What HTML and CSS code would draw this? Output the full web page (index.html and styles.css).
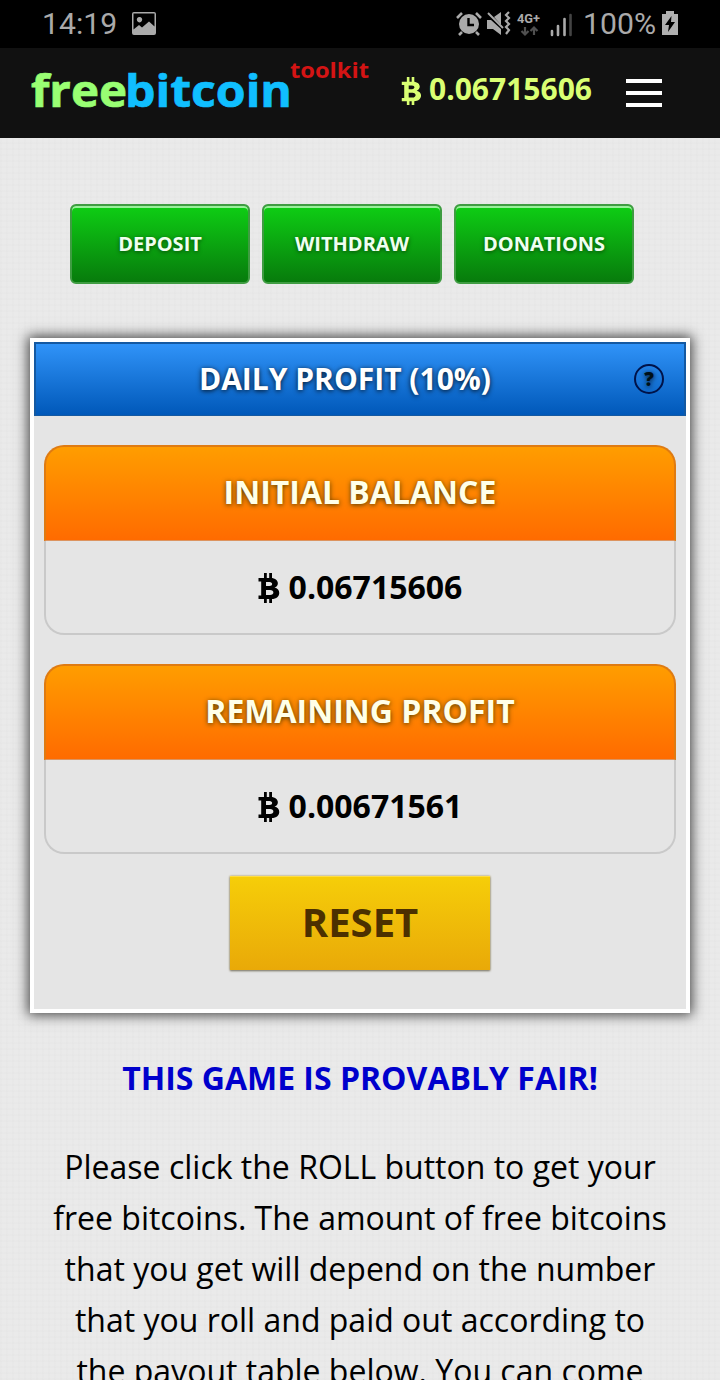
FILE: index.html
```html
<!DOCTYPE html>
<html lang="en">
<head>
<meta charset="utf-8">
<title>FreeBitcoin Toolkit</title>
<link rel="stylesheet" href="styles.css">
</head>
<body>
<svg width="0" height="0" class="defs" aria-hidden="true">
  <symbol id="btc" viewBox="0 0 22 30">
    <path d="M0.5 5H12.5C21.500 5 21.500 13.3 16.500 14.6C23.500 15.8 23 26 13.5 26H0.5V22.500H3.2V8.500H0.5ZM8 9V13H11.5C15 13 15 9 11.5 9ZM8 17V22H12C16.500 22 16.500 17 12 17Z" fill-rule="evenodd"/>
    <path d="M6 0H8.8V7H6ZM11.2 0H14V7H11.2ZM6 24H8.8V30H6ZM11.2 24H14V30H11.2Z"/>
  </symbol>
</svg>
<div class="status">
  <span class="clock">14:19</span>
  <svg class="picture" width="24" height="23" viewBox="0 0 24 23"><path fill="#aaa" fill-rule="evenodd" d="M2 0H22Q24 0 24 2V21Q24 23 22 23H2Q0 23 0 21V2Q0 0 2 0ZM1.5 1.5V17.5L7 13L10 15.5L17 9.500L22.500 14.500V1.500ZM7.500 5A2.700 2.700 0 1 1 7.490 5Z"/></svg>
  <svg class="indicators" width="120" height="30" viewBox="0 0 120 30">
    <g fill="#aaa" stroke="#aaa">
      <circle cx="13" cy="15" r="10" stroke="none"/>
      <path d="M1 9L6 4M20 4L25 9M6 23L3 26M20 23L23 26" fill="none" stroke-width="2.600"/>
      <path d="M12.500 9V16H18" fill="none" stroke="#000" stroke-width="2.400"/>
      <path d="M31 11H35L45 20V26L37 20H31ZM38 8L45 3V16Z" stroke="none"/>
      <path d="M32 4L47 19" fill="none" stroke-width="2"/>
      <path d="M53 3L50 6L53 9L50 12L53 15L50 18L53 21L50 25" fill="none" stroke-width="2.200"/>
    </g>
    <text x="61" y="14" class="network" textLength="23" lengthAdjust="spacingAndGlyphs">4G+</text>
    <path d="M69 18V25M65.500 22L69 25.500L72.500 22M78 26V18M74.500 22L78 18.500L81.500 22" fill="none" stroke="#505050" stroke-width="2.200"/>
    <path d="M96 22V26M102 17V26M108.500 10V26" stroke="#aaa" stroke-width="2.600" stroke-linecap="round"/>
    <path d="M114.500 6V26" stroke="#444" stroke-width="2.600" stroke-linecap="round"/>
  </svg>
  <span class="percent">100%</span>
  <svg class="battery" width="16" height="24" viewBox="0 0 16 24"><path fill="#b0b0b0" d="M4 0H12V3H16V24H0V3H4Z"/><path d="M9.500 5L3 14H7L6 21L13 11H9Z" fill="#000"/></svg>
</div>
<header class="header">
  <svg class="logo" width="342" height="70" viewBox="0 0 342 70">
    <text class="logo-main free" x="0" y="59" textLength="96" lengthAdjust="spacingAndGlyphs">free</text>
    <text class="logo-main bitcoin" x="94" y="59" textLength="167" lengthAdjust="spacingAndGlyphs">bitcoin</text>
    <text class="logo-kit" x="259" y="30" textLength="79" lengthAdjust="spacingAndGlyphs">toolkit</text>
  </svg>
  <div class="balance"><svg class="btc" viewBox="0 0 22 30"><use href="#btc"/></svg><span>0.06715606</span></div>
  <div class="menu"><i></i><i></i><i></i></div>
</header>
<main>
  <nav class="actions">
    <a class="action">DEPOSIT</a>
    <a class="action">WITHDRAW</a>
    <a class="action">DONATIONS</a>
  </nav>
  <section class="panel">
    <h1 class="panel-title"><span>DAILY PROFIT (10%)</span><b class="help">?</b></h1>
    <div class="card">
      <h2 class="card-title">INITIAL BALANCE</h2>
      <div class="card-value"><svg class="btc" viewBox="0 0 22 30"><use href="#btc"/></svg><span>0.06715606</span></div>
    </div>
    <div class="card">
      <h2 class="card-title">REMAINING PROFIT</h2>
      <div class="card-value"><svg class="btc" viewBox="0 0 22 30"><use href="#btc"/></svg><span>0.00671561</span></div>
    </div>
    <button class="reset">RESET</button>
  </section>
  <h3 class="fair">THIS GAME IS PROVABLY FAIR!</h3>
  <p class="intro">Please click the ROLL button to get your<br>free bitcoins. The amount of free bitcoins<br>that you get will depend on the number<br>that you roll and paid out according to<br>the payout table below. You can come</p>
</main>
</body>
</html>
```
FILE: styles.css
```css
* { box-sizing: border-box; }
html { height: 1380px; overflow: hidden; }
body {
  margin: 0;
  width: 720px;
  height: 1380px;
  overflow: hidden;
  font-family: "Open Sans", "Noto Sans", sans-serif;
  color: #000;
  background-color: #eaeaea;
  background-image:
    repeating-linear-gradient(0deg, rgba(0,0,0,.006) 0 2px, transparent 2px 6px),
    repeating-linear-gradient(90deg, rgba(0,0,0,.006) 0 2px, transparent 2px 6px);
}
h1, h2, h3, p { margin: 0; }
.defs { display: block; height: 0; }
.status {
  height: 48px;
  background: #000;
  color: #aaa;
  display: flex;
  align-items: center;
  padding: 0 41px 0 42px;
  font: 30.200px/48px Roboto, sans-serif;
}
.clock { width: 90px; white-space: nowrap; }
.picture { margin: -2px 300px 0 0; }
.indicators { flex: none; margin-top: -1px; }
.network { font: bold 12.500px Roboto, sans-serif; fill: #aaa; }
.percent { margin-left: 7px; width: 79px; white-space: nowrap; }
.battery { margin-top: -2px; }
.header {
  height: 90px;
  background: #111;
  display: flex;
  align-items: flex-start;
  padding: 0 58px 0 31px;
}
.logo { flex: none; overflow: visible; }
.logo-main { font: bold 44px "Open Sans", sans-serif; stroke-width: .7px; }
.free { fill: #99ff73; stroke: #99ff73; }
.bitcoin { fill: #10bfff; stroke: #10bfff; }
.logo-kit { font: bold 22px "Open Sans", sans-serif; fill: #d41414; }
.balance {
  display: flex;
  align-items: center;
  margin: 22px 0 0 28px;
  color: #daff73;
  font-size: 30px;
  font-weight: 700;
  line-height: 38px;
}
.btc { width: 22px; height: 30px; fill: currentColor; flex: none; }
.balance .btc { width: 21px; height: 28px; margin: 3px 7px 0 0; }
.menu { margin: 31px 0 0 auto; display: grid; gap: 8px; }
.menu i { width: 36px; height: 4px; background: #fff; }
.actions { display: flex; gap: 12px; padding: 66px 0 0 70px; }
.action {
  width: 180px;
  height: 80px;
  border: 2px solid #3f9c42;
  border-radius: 6px;
  background: linear-gradient(#0ece14, #077b0c);
  box-shadow: inset 0 2px 0 #9aef9c;
  color: #effff0;
  font-size: 20px;
  font-weight: 700;
  line-height: 75px;
  text-align: center;
  text-shadow: 0 1px 4px rgba(0,0,0,.55);
}
.panel {
  width: 660px;
  height: 675px;
  margin: 54px auto 0;
  border: 4px solid #fff;
  background: #e5e5e5;
  box-shadow: 0 0 12px 2px #444;
}
.panel-title {
  height: 74px;
  border: 2px solid #1459a2;
  border-bottom-width: 1px;
  background: linear-gradient(#3093f8, #0058b9);
  display: flex;
  align-items: center;
  padding: 0 20px 0 0;
  color: #fff;
  font-size: 30px;
  line-height: 70px;
  font-weight: 700;
  text-shadow: 0 1px 5px rgba(0,0,0,.85);
}
.panel-title span { flex: 1; text-align: center; padding-left: 20px; margin-top: -2px; }
.help {
  width: 30px;
  height: 30px;
  margin-top: -1px;
  border: 2px solid #001349;
  border-radius: 50%;
  color: #001016;
  font-size: 19px;
  line-height: 27px;
  text-align: center;
}
.card { margin: 29px 10px 0; height: 190px; border-radius: 20px; }
.card-title {
  height: 96px;
  border: 2px solid #df7b12;
  border-bottom: 1px solid #dc9460;
  border-radius: 20px 20px 0 0;
  background: linear-gradient(#ff9d00, #ff6b00);
  color: #ffffe8;
  font-size: 32px;
  line-height: 90px;
  font-weight: 700;
  text-align: center;
  text-shadow: 0 1px 5px rgba(65,55,0,.95);
}
.card-value {
  height: 94px;
  padding-bottom: 2px;
  border: 2px solid #c9c9c9;
  border-top: 0;
  border-radius: 0 0 20px 20px;
  display: flex;
  justify-content: center;
  align-items: center;
  gap: 9px;
  font-size: 32px;
  font-weight: 700;
}
.card-value .btc { margin-top: 4px; }
.reset {
  display: block;
  width: 260px;
  height: 94px;
  margin: 22px auto 0;
  padding: 0 0 2px;
  border: 0;
  background: linear-gradient(#f6ce09, #e9a908);
  box-shadow: 0 1px 2px #77746b, 0 0 2px #bba65d, inset 0 1px 0 #ffdd42;
  color: #4c3000;
  font: 700 40px/92px "Open Sans", sans-serif;
}
.fair {
  margin-top: 39px;
  color: #00c;
  font-size: 32px;
  line-height: 51px;
  font-weight: 700;
  text-align: center;
}
.intro {
  margin-top: 38px;
  font-size: 32px;
  line-height: 51px;
  text-align: center;
  white-space: nowrap;
}
```
